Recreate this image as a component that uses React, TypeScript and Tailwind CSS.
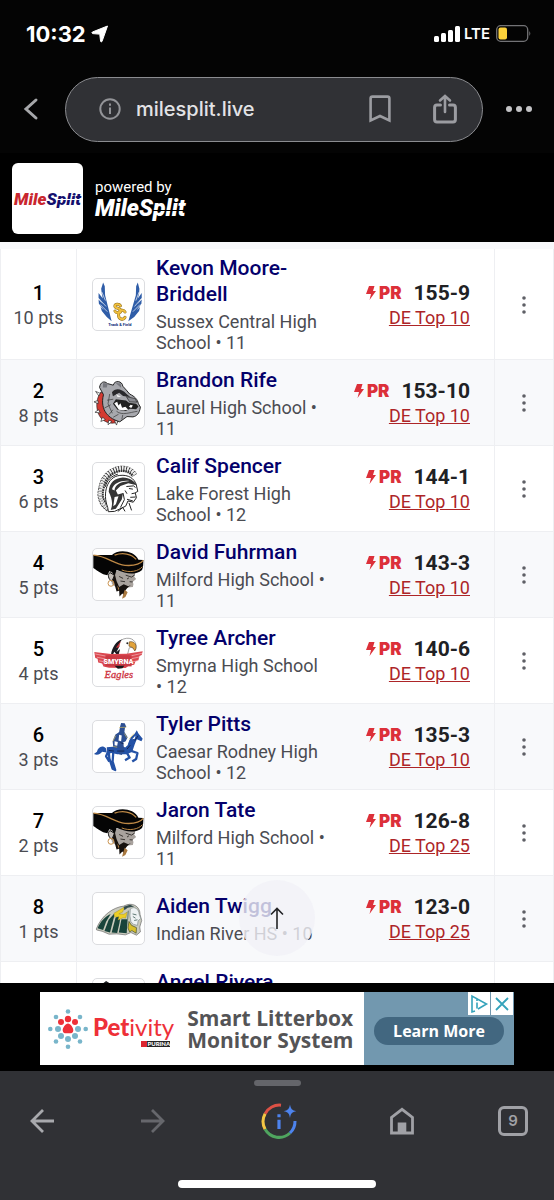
import React from 'react'

type Result = {
  rank?: number
  pts?: number
  name: string
  school?: string
  mark?: string
  top?: string
  logo: React.ReactNode
}

/* School logos, all drawn on a 156 x 156 canvas */
function WingsLogo() {
  return (
    <svg viewBox="0 0 156 156" className="w-full h-full">
      <g fill="#2f5da8">
        <path d="M31 11 L36 22 L37 50 L57 129 L42 116 L27 98 L23 86 L34 96 L18 76 L17 63 L31 78 L17 58 L17 43 L30 60 L27 46 L25 30 Z" />
        <path d="M137 11 L132 22 L131 50 L108 129 L126 116 L141 98 L144 86 L133 96 L148 76 L149 63 L135 78 L149 58 L149 43 L137 60 L141 46 L142 30 Z" />
      </g>
      <g stroke="#fff" strokeWidth="2" fill="none">
        <path d="M18 60 L40 84 M22 78 L44 100 M27 40 L38 66 M148 60 L127 84 M144 78 L122 100 M141 40 L131 66" />
      </g>
      <g fill="none" strokeLinecap="round">
        <path d="M84 82 C80 75 67 76 67 83 C67 91 85 88 85 97 C85 105 70 105 67 98 M98 101 C93 92 78 95 78 109 C78 124 93 127 98 117" stroke="#8a6a1c" strokeWidth="9" />
        <path d="M84 82 C80 75 67 76 67 83 C67 91 85 88 85 97 C85 105 70 105 67 98 M98 101 C93 92 78 95 78 109 C78 124 93 127 98 117" stroke="#f0bf3e" strokeWidth="6" />
      </g>
      <text x="82" y="145" textAnchor="middle" fontSize="12" fontWeight="900" fill="#233f86" fontFamily="Roboto, sans-serif">Track &amp; Field</text>
    </svg>
  )
}

function BulldogLogo() {
  return (
    <svg viewBox="0 0 156 156" className="w-full h-full">
      <path d="M24 46 C4 72 8 122 38 136 C50 143 66 142 76 138 L74 128 C44 126 24 92 34 52 Z" fill="#d43a31" stroke="#222" strokeWidth="2" />
      <g fill="#fff" stroke="#222" strokeWidth="2">
        <path d="M22 50 L8 44 L18 58 Z M15 72 L3 76 L16 82 Z M17 100 L6 108 L22 110 Z M29 123 L24 136 L38 130 Z M48 132 L46 146 L58 136 Z M66 134 L72 147 L76 133 Z" />
      </g>
      <path d="M20 32 C22 16 34 10 44 20 L62 25 C66 8 90 12 91 28 C98 36 106 44 112 52 C128 60 136 68 139 82 L145 92 C142 112 134 120 122 122 L104 121 L82 137 C50 128 20 104 32 54 Z" fill="#a7a8ad" stroke="#222" strokeWidth="3" />
      <path d="M31 18 L45 20 L42 32 L30 32 Z M69 18 L85 20 L86 33 Z" fill="#77787e" />
      <path d="M58 47 C68 32 88 36 102 51 L114 61 L92 58 L80 48 L61 59 Z" fill="#29292c" />
      <path d="M71 52 L86 61 L75 61 Z" fill="#f0f0f0" />
      <path d="M61 82 L70 68 L101 72 L110 79 L132 82 L139 90 L132 99 L113 97 L100 104 L75 100 Z" fill="#222" />
      <path d="M65 80 L74 76 L78 87 L84 80 L89 94 L99 91 L108 100 L93 102 L79 100 Z M115 85 L122 87 L117 95 L110 91 Z" fill="#fff" />
      <path d="M102 60 L128 66 L135 77 L112 76 Z" fill="#8b8c92" stroke="#222" strokeWidth="2" />
      <path d="M72 105 C90 119 112 108 136 105 M51 52 L46 82 L59 111 M43 71 L62 68 M35 95 L54 85 M49 115 L61 100 M62 123 L78 114 M88 130 L91 116" fill="none" stroke="#333" strokeWidth="2" />
    </svg>
  )
}

function SpartanLogo() {
  return (
    <svg viewBox="0 0 156 156" className="w-full h-full">
      <path d="M48 140 C26 124 19 102 26 78 C30 52 42 36 62 25 C86 12 114 17 127 38" fill="none" stroke="#333" strokeWidth="19" strokeDasharray="6 2" />
      <path d="M46 140 C25 124 17 102 24 78 C28 50 41 33 61 22 C86 9 116 14 129 36" fill="none" stroke="#f2f2f2" strokeWidth="11" strokeDasharray="5 3" />
      <path d="M45 136 C28 92 43 42 82 38 C109 35 126 48 132 65 L137 87 L129 91 L133 106 L123 120 L107 116 L100 132 L66 148 L47 149 Z" fill="#fff" stroke="#222" strokeWidth="3" />
      <path d="M48 88 C50 58 67 46 91 44 C113 44 128 56 134 68 L108 62 L84 70 L70 84 L76 96 L92 92 L88 112 L70 140 L54 144 C62 126 58 108 48 88 Z" fill="#353535" />
      <path d="M58 80 C64 61 86 52 112 55 L92 58 C76 62 66 72 66 84 Z M66 104 L78 102 L70 126 L62 132 Z" fill="#fff" />
      <path d="M102 72 L124 70 L130 75 M110 78 L122 80 M128 92 L118 94 M114 105 L131 104 M104 111 L122 116 M92 92 L96 112 L84 136 M98 84 L104 94" stroke="#222" strokeWidth="3" fill="none" />
      <path d="M38 73 C42 53 56 40 76 34 M76 148 L91 136 L98 148 M110 122 L118 145" stroke="#222" strokeWidth="3" fill="none" />
    </svg>
  )
}

function BuccaneerLogo() {
  return (
    <svg viewBox="0 0 156 156" className="w-full h-full">
      <path d="M52 66 L58 108 L78 122 L92 136 L106 118 L122 116 L124 106 L120 102 L132 92 L126 84 L130 70 Z" fill="#a9a39e" />
      <path d="M52 72 C44 76 46 94 58 98 L66 81 Z" fill="#c3bdb8" stroke="#111" strokeWidth="3" />
      <path d="M1 18 L58 18 C74 0 126 2 139 33 L154 34 C154 46 154 56 150 64 C134 78 112 76 96 72 L72 64 L66 84 L58 70 L50 68 L44 80 C26 78 14 66 1 58 Z" fill="#050505" />
      <path d="M1 19 C44 22 62 46 98 50 C124 52 143 48 154 35 M66 19 C90 10 118 14 132 32" fill="none" stroke="#bd8845" strokeWidth="4" />
      <path d="M88 64 C112 74 140 68 151 54" fill="none" stroke="#bd8845" strokeWidth="3" />
      <path d="M66 74 L72 98 L80 116 L94 108 L108 114 L116 110 L104 120 L98 128 L96 143 L90 136 L81 145 L80 128 L72 130 L66 108 L60 98 Z" fill="#17120f" />
      <path d="M97 125 L106 132 L99 147 L89 152 L92 140 Z M74 112 L80 120 L78 128 Z" fill="#a8783f" />
      <path d="M100 80 L118 86 L128 79 M104 92 L110 88 M112 100 L122 101 M80 84 L92 90 M84 98 L98 100" stroke="#383431" strokeWidth="3" fill="none" />
      <circle cx="55" cy="105" r="9" fill="none" stroke="#c8914c" strokeWidth="3" />
    </svg>
  )
}

function EagleLogo() {
  return (
    <svg viewBox="0 0 156 156" className="w-full h-full">
      <path d="M60 62 C62 35 78 13 103 10 C124 8 137 25 130 46 C126 41 119 36 111 39 L105 62 Z" fill="#fff" stroke="#777" strokeWidth="2" />
      <path d="M65 51 L58 65 L55 61 C58 38 71 19 88 14 L76 35 L82 32 L72 52 L83 43 L77 65 Z" fill="#1b1a20" />
      <path d="M70 39 L85 19 L79 38 Z" fill="#c7333a" />
      <path d="M111 21 C126 17 138 31 128 49 L122 39 L110 34 Z" fill="#e2a33b" stroke="#6c4920" strokeWidth="2" />
      <circle cx="105" cy="25" r="3" fill="#222" />
      <path d="M4 52 L55 58 L102 57 L152 50 L149 61 L142 64 L139 77 L130 80 L126 91 L109 94 L100 101 L49 100 L32 96 L28 87 L16 84 L14 73 L7 70 Z" fill="#db4850" />
      <path d="M7 58 L51 67 L107 66 L150 56 M12 68 L51 76 L107 75 L143 67 M19 79 L51 85 L107 85 L136 79" stroke="#f4bfc1" strokeWidth="2" fill="none" />
      <rect x="38" y="62" width="80" height="34" fill="#c93a44" />
      <text x="78" y="88" textAnchor="middle" fontSize="22" fontWeight="900" fill="#fff" fontFamily="Roboto, sans-serif">SMYRNA</text>
      <path d="M66 94 L96 94 L90 102 L76 103 Z" fill="#18171b" />
      <text x="79" y="131" textAnchor="middle" fontSize="32" fontStyle="italic" fill="#ce333f" stroke="#ce333f" strokeWidth="1" fontFamily="'Liberation Serif', serif">Eagles</text>
    </svg>
  )
}

function RiderLogo() {
  return (
    <svg viewBox="0 0 156 156" className="w-full h-full">
      <path d="M40 84 C28 72 16 80 12 94 L3 101 C14 106 24 100 28 94 L42 96 Z" fill="#2452a6" />
      <path d="M42 80 L70 78 L100 80 L116 50 L127 40 L134 28 L139 38 L152 54 L148 62 L134 56 L128 70 L120 94 L104 102 L74 102 L58 98 L44 100 Z" fill="#2452a6" />
      <path d="M48 92 L50 114 L60 146 L68 150 L60 124 L62 96 M46 94 L40 108 L50 124 M112 90 L136 98 L132 116 L120 124 M104 98 L112 112 L98 120" fill="none" stroke="#2452a6" strokeWidth="7" strokeLinejoin="round" />
      <path d="M83 16 L86 6 L97 7 L102 18 L98 20 L96 34 L106 50 L100 62 L92 66 L96 88 L88 104 L80 102 L82 84 L62 80 L60 62 L68 42 L80 34 Z" fill="#2c4f93" />
      <path d="M80 42 L88 44 L86 62 L78 60 Z M66 62 L76 64 L74 76 L66 74 Z M98 68 L110 60 L106 74 L98 80 Z M120 56 L130 44 L128 54 Z" fill="#fff" />
      <path d="M80 20 L102 19 M96 38 L104 52 M61 62 L70 44 M110 56 L126 38 M62 78 L74 80" stroke="#d6bd5b" strokeWidth="2" fill="none" />
      <path d="M84 66 L94 70 M104 86 L114 74 M48 90 L64 92 M128 60 L138 45 M74 92 L96 92" stroke="#142755" strokeWidth="3" fill="none" />
    </svg>
  )
}

function IndianLogo() {
  return (
    <svg viewBox="0 0 156 156" className="w-full h-full">
      <path d="M10 110 C27 67 62 44 94 40 C120 26 144 40 144 66 L149 84 L143 104 L145 119 L133 129 L116 121 L99 128 L73 125 L49 126 L28 117 L11 113 Z" fill="#c9cabd" stroke="#666" strokeWidth="2" />
      <path d="M14 108 C23 86 38 72 54 64 L40 88 L31 113 Z M35 116 L48 82 L68 60 L62 82 L52 121 Z M57 121 L69 76 L85 66 L81 92 L74 122 Z M79 121 L87 80 L106 80 L103 123 Z" fill="#19443b" />
      <path d="M64 62 L96 43 L91 58 L79 64 L94 65 L105 58 L100 77 L92 76 L76 83 L79 73 L66 74 Z" fill="#edce26" stroke="#7b7420" strokeWidth="1" />
      <path d="M94 42 L113 36 L126 41 L106 45 L96 53 Z" fill="#334b4c" />
      <path d="M114 49 C127 38 141 51 141 64 L146 78 L138 85 L136 99 L124 96 L116 88 L113 70 Z" fill="#eef2f3" stroke="#7c898b" strokeWidth="2" />
      <path d="M110 87 L118 99 L133 106 L132 123 L119 115 L112 119 L107 107 Z" fill="#d8bf2b" stroke="#3e4826" strokeWidth="2" />
      <path d="M121 64 L133 67 M122 72 L130 77 M126 84 L136 82 M108 54 L106 82" stroke="#5e7773" strokeWidth="3" fill="none" />
    </svg>
  )
}

function KnightLogo() {
  return (
    <svg viewBox="0 0 156 156" className="w-full h-full">
      <path d="M32 12 L40 6 L50 12 L58 31 L91 43 L113 77 L103 122 L48 139 L27 88 Z" fill="#202124" />
    </svg>
  )
}

const results: Result[] = [
  { rank: 1, pts: 10, name: 'Kevon Moore-Briddell', school: 'Sussex Central High School • 11', mark: '155-9', top: 'DE Top 10', logo: <WingsLogo /> },
  { rank: 2, pts: 8, name: 'Brandon Rife', school: 'Laurel High School • 11', mark: '153-10', top: 'DE Top 10', logo: <BulldogLogo /> },
  { rank: 3, pts: 6, name: 'Calif Spencer', school: 'Lake Forest High School • 12', mark: '144-1', top: 'DE Top 10', logo: <SpartanLogo /> },
  { rank: 4, pts: 5, name: 'David Fuhrman', school: 'Milford High School • 11', mark: '143-3', top: 'DE Top 10', logo: <BuccaneerLogo /> },
  { rank: 5, pts: 4, name: 'Tyree Archer', school: 'Smyrna High School • 12', mark: '140-6', top: 'DE Top 10', logo: <EagleLogo /> },
  { rank: 6, pts: 3, name: 'Tyler Pitts', school: 'Caesar Rodney High School • 12', mark: '135-3', top: 'DE Top 10', logo: <RiderLogo /> },
  { rank: 7, pts: 2, name: 'Jaron Tate', school: 'Milford High School • 11', mark: '126-8', top: 'DE Top 25', logo: <BuccaneerLogo /> },
  { rank: 8, pts: 1, name: 'Aiden Twigg', school: 'Indian River HS • 10', mark: '123-0', top: 'DE Top 25', logo: <IndianLogo /> },
  { name: 'Angel Rivera', logo: <KnightLogo /> },
]

function StatusBar() {
  return (
    <div className="flex items-center justify-between h-[67px] pl-[26px] pr-[22px] font-['Inter',sans-serif] text-white">
      <div className="flex items-center gap-[5px]">
        <span className="text-[22px] leading-6 font-bold">10:32</span>
        <svg viewBox="0 0 18 18" className="w-[18px] h-[18px]">
          <path d="M16.5 1 L11 16.5 Q10.3 17.6 9.6 16.3 L8.8 9.8 Q8.7 9.2 8 9.1 L1.6 8.6 Q.2 8 1.4 7 Z" fill="#fff" stroke="#fff" strokeLinejoin="round" />
        </svg>
      </div>
      <div className="flex items-center gap-1">
        <svg viewBox="0 0 26 16" className="w-[26px] h-4" fill="#fff">
          <rect x="0" y="10" width="5" height="6" rx="1.5" />
          <rect x="7" y="7" width="5" height="9" rx="1.5" />
          <rect x="14" y="4" width="5" height="12" rx="1.5" />
          <rect x="21" y="0" width="5" height="16" rx="1.5" />
        </svg>
        <span className="text-[15px] leading-5 font-semibold">LTE</span>
        <svg viewBox="0 0 36 17" className="w-9 h-[17px] ml-[2px]">
          <rect x=".7" y=".7" width="31" height="15.6" rx="4" fill="none" stroke="#737376" strokeWidth="1.3" />
          <rect x="2.5" y="2.5" width="8.5" height="12" rx="2" fill="#fdd23a" />
          <path d="M33.3 6 Q35.3 8.5 33.3 11 Z" fill="#737376" />
        </svg>
      </div>
    </div>
  )
}

function AddressBar() {
  return (
    <div className="flex items-center h-[86px] pb-0.5 pl-[23px] pr-[22px]">
      <button aria-label="Back">
        <svg viewBox="0 0 16 24" className="w-4 h-6" fill="none" stroke="#a6a7aa" strokeWidth="3" strokeLinecap="round">
          <path d="M13 3 L3 12 L13 21" />
        </svg>
      </button>
      <div className="flex-1 min-w-0 flex items-center h-[65px] ml-[26px] mr-[23px] pl-[33px] pr-[25px] rounded-full border border-[#8b8c90] bg-[#303135]">
        <svg viewBox="0 0 22 22" className="w-[22px] h-[22px] shrink-0" fill="none" stroke="#939498" strokeWidth="2">
          <circle cx="11" cy="11" r="9.7" />
          <path d="M11 9.5 V16 M11 5.5 V7.7" />
        </svg>
        <input
          aria-label="Address"
          defaultValue="milesplit.live"
          className="flex-1 min-w-0 ml-[15px] bg-transparent outline-none text-[#e3e3e6] font-['Inter',sans-serif] text-[20px] leading-7 font-medium"
        />
        <button aria-label="Bookmark" className="shrink-0">
          <svg viewBox="0 0 22 28" className="w-[22px] h-7" fill="none" stroke="#9b9ca1" strokeWidth="2.6">
            <path d="M1.6 25.5 V3.5 Q1.6 1.6 3.5 1.6 H18.5 Q20.4 1.6 20.4 3.5 V25.5 L11 21 Z" />
          </svg>
        </button>
        <button aria-label="Share" className="shrink-0 ml-[42px]">
          <svg viewBox="0 0 24 30" className="w-6 h-[30px]" fill="none" stroke="#9b9ca1" strokeWidth="3" strokeLinecap="round">
            <path d="M7.5 11 H4 Q1.6 11 1.6 13.5 V25.5 Q1.6 28 4 28 H20 Q22.4 28 22.4 25.5 V13.5 Q22.4 11 20 11 H16.5" />
            <path d="M12 18 V2.5 M7 6.5 L12 2 L17 6.5" strokeWidth="2.6" />
          </svg>
        </button>
      </div>
      <button aria-label="More" className="shrink-0">
        <svg viewBox="0 0 26 6" className="w-[26px] h-1.5" fill="#c3c3c6">
          <circle cx="3" cy="3" r="3" />
          <circle cx="13" cy="3" r="3" />
          <circle cx="23" cy="3" r="3" />
        </svg>
      </button>
    </div>
  )
}

function SiteHeader() {
  return (
    <header className="flex items-center h-[89px] pt-0.5 pl-3 gap-3 bg-black font-['Roboto',sans-serif]">
      <a href="#" className="flex items-center justify-center w-[71px] h-[71px] rounded-md bg-white text-[17px] leading-5 font-black italic">
        <span className="text-[#c9262e]">Mile</span>
        <span className="relative text-[#14106e]">
          Split
          <span className="absolute left-[10px] right-0 top-[10px] h-px bg-white" />
        </span>
      </a>
      <div className="text-white">
        <div className="text-[15px] leading-5">powered by</div>
        <div className="text-[23px] leading-[23px] font-black italic">
          Mile
          <span className="relative">
            Split
            <span className="absolute left-[14px] right-0 top-[15px] h-px bg-black" />
          </span>
        </div>
      </div>
    </header>
  )
}

function ResultRow({ result }: { result: Result }) {
  return (
    <tr className="border-b border-[#eeeff2] odd:bg-white even:bg-[#f8f9fb]">
      <td className="pt-[2px] border-x border-[#eeeff2] text-center">
        {result.rank && (
          <>
            <div className="text-[20px] leading-6 font-medium text-black">{result.rank}</div>
            <div className="text-lg leading-[25px] text-[#4b4c52]">{result.pts} pts</div>
          </>
        )}
      </td>
      <td className="h-[86px] pt-[6px] pb-[6px] pl-[15px]">
        <div className="flex items-center gap-[11px]">
          <div className="w-[53px] h-[53px] shrink-0 rounded-[5px] border border-[#dcdde0] bg-white overflow-hidden">
            {result.logo}
          </div>
          <div className="flex-1 min-w-0">
            <a href="#" className="block mb-1 text-[21px] leading-[26px] font-medium text-[#04006b]">{result.name}</a>
            <div className={result.school ? 'text-lg leading-[21px] text-[#4b4c52]' : 'h-[42px]'}>{result.school}</div>
          </div>
        </div>
      </td>
      <td className="pt-[2px] pr-6 text-right whitespace-nowrap">
        {result.mark && (
          <>
            <div className="flex items-center justify-end leading-6">
              <svg viewBox="0 0 10 14" className="w-[10px] h-[14px] mr-[3px]" fill="#dc3039">
                <path d="M3 0 H8.5 L7 5 H10 L3.5 14 L5 8 H0 Z" />
              </svg>
              <span className="font-['Inter',sans-serif] text-[17px] leading-6 font-black text-[#dc3039]">PR</span>
              <span className="ml-3 text-[21px] font-bold text-[#202124]">{result.mark}</span>
            </div>
            <a href="#" className="block text-lg leading-[25px] text-[#ad2528] underline">{result.top}</a>
          </>
        )}
      </td>
      <td className="border-x border-[#eeeff2] text-center">
        {result.mark && (
          <button aria-label={`Options for ${result.name}`} className="align-middle">
            <svg viewBox="0 0 4 18" className="w-1 h-[18px]" fill="#5f6066">
              <circle cx="2" cy="2" r="1.8" />
              <circle cx="2" cy="9" r="1.8" />
              <circle cx="2" cy="16" r="1.8" />
            </svg>
          </button>
        )}
      </td>
    </tr>
  )
}

function AdBanner() {
  return (
    <aside className="flex justify-center pt-[9px] pb-[6px] bg-black font-['Open_Sans','Noto_Sans',sans-serif]">
      <div className="relative flex w-[474px] h-[73px] bg-white">
        <div className="flex-1 flex items-center pl-2">
          <svg viewBox="0 0 40 40" className="w-10 h-10 shrink-0">
            <g fill="#78b5ca">
              <circle cx="20" cy="2.5" r="2.3" />
              <circle cx="32" cy="8" r="2.3" />
              <circle cx="37.7" cy="20" r="2.3" />
              <circle cx="32" cy="32.5" r="2.3" />
              <circle cx="20" cy="37.7" r="2.3" />
              <circle cx="8" cy="32.5" r="2.3" />
              <circle cx="2.3" cy="20" r="2.3" />
              <circle cx="8" cy="8" r="2.3" />
              <circle cx="10" cy="20" r="3" />
              <circle cx="13" cy="27" r="3" />
              <circle cx="20" cy="30" r="3" />
              <circle cx="27" cy="27" r="3" />
              <circle cx="30" cy="20" r="3" />
            </g>
            <g fill="#ee3038">
              <circle cx="13" cy="13" r="3" />
              <circle cx="20" cy="10" r="3.2" />
              <circle cx="27" cy="13" r="3" />
              <path d="M20 14.5 C22.5 14.5 25.5 19 25.3 21.5 C25 25 22 24.2 20 24.2 C18 24.2 15 25 14.7 21.5 C14.5 19 17.5 14.5 20 14.5 Z" />
            </g>
          </svg>
          <div className="flex flex-col items-end ml-[5px] pt-px font-['Lato',sans-serif]">
            <div className="text-[24px] leading-[29px] text-[#ee3038]">
              <span className="font-black">Pet</span>ivity
            </div>
            <div className="mr-1 flex bg-[#262626] text-white text-[6px] leading-[6px] font-black">
              <span className="w-[6px] bg-[#dc2630]" />PURINA
            </div>
          </div>
          <div className="ml-[13px] text-[21px] leading-[22px] font-bold text-[#545456] whitespace-nowrap">
            Smart Litterbox<br />Monitor System
          </div>
        </div>
        <div className="flex items-center justify-center w-[150px] pt-1 bg-[#7298af]">
          <button className="w-[130px] h-[28px] rounded-full bg-[#426780] text-[16px] leading-6 font-bold text-white">Learn More</button>
        </div>
        <div className="absolute top-0 right-[1px] flex gap-px">
          <a href="#" aria-label="AdChoices" className="w-[22px] h-[23px] bg-white">
            <svg viewBox="0 0 22 23" className="w-full h-full" fill="none" stroke="#35a3bb" strokeWidth="1.6">
              <path d="M7 19 L4 20 V4 L18.5 12 L10 17 M9 10.5 V16.5 M9 7.5 V9" />
            </svg>
          </a>
          <button aria-label="Close ad" className="w-[22px] h-[23px] bg-white">
            <svg viewBox="0 0 22 23" className="w-full h-full" stroke="#35a3bb" strokeWidth="1.8">
              <path d="M5 6 L17 18 M17 6 L5 18" />
            </svg>
          </button>
        </div>
      </div>
    </aside>
  )
}

function BottomBar() {
  return (
    <footer className="flex flex-col items-center h-[129px] pt-[9px] pb-3 bg-[#303135]">
      <div className="w-[47px] h-1.5 rounded-full bg-[#64656a]" />
      <nav className="flex items-center justify-between w-full mt-4 pl-[30px] pr-[26px]">
        <button aria-label="Previous page">
          <svg viewBox="0 0 24 24" className="w-6 h-6" fill="none" stroke="#a8a9ad" strokeWidth="2.8">
            <path d="M24 12 H2 M13 1 L2 12 L13 23" />
          </svg>
        </button>
        <button aria-label="Next page" className="mx-1">
          <svg viewBox="0 0 24 24" className="w-6 h-6" fill="none" stroke="#66676c" strokeWidth="2.8">
            <path d="M0 12 H22 M11 1 L22 12 L11 23" />
          </svg>
        </button>
        <button aria-label="Search" className="mx-2">
          <svg viewBox="0 0 38 38" className="w-[38px] h-[38px]" fill="none" strokeWidth="3">
            <path d="M5.1 11.8 A16 16 0 0 1 21 3.2" stroke="#dc5145" />
            <path d="M5.1 27.2 A16 16 0 0 1 5.1 11.8" stroke="#f3c644" />
            <path d="M30 31 A16 16 0 0 1 5.1 27.2" stroke="#4fa55f" />
            <path d="M35 19 A16 16 0 0 1 30 31" stroke="#4d83ed" />
            <path d="M30 2.5 C30.8 7 32 8.3 36.3 9.2 C32 10 30.8 11.3 30 16 C29.2 11.3 28 10 23.7 9.2 C28 8.3 29.2 7 30 2.5 Z" fill="#4d83ed" />
            <path d="M19 12.2 V15.2 M19 17.8 V27" stroke="#4d83ed" strokeWidth="3.2" />
          </svg>
        </button>
        <button aria-label="Home">
          <svg viewBox="0 0 26 28" className="w-[26px] h-7">
            <path d="M2.5 26 V10.5 L13 2.3 L23.5 10.5 V26 Z" fill="none" stroke="#a0a1a6" strokeWidth="2.8" />
            <path d="M8.7 26 V15.5 H17.3 V26 Z" fill="#a0a1a6" />
          </svg>
        </button>
        <button aria-label="Tabs" className="w-[30px] h-[30px] rounded-md border-[3px] border-[#a0a1a6] text-[#a0a1a6] font-['Inter',sans-serif] text-[15px] leading-6 font-semibold">
          9
        </button>
      </nav>
      <div className="mt-auto w-[198px] h-2 rounded-full bg-white" />
    </footer>
  )
}

export default function App() {
  return (
    <div className="flex flex-col h-screen bg-[#040404]">
      <StatusBar />
      <AddressBar />
      <SiteHeader />

      <main className="relative flex-1 min-h-0 overflow-hidden bg-[#f8f9fb] pt-[7px] font-['Roboto',sans-serif]">
        <table className="w-full table-fixed border-collapse">
          <colgroup>
            <col className="w-[76px]" />
            <col />
            <col className="w-[167px]" />
            <col className="w-[59px]" />
          </colgroup>
          <tbody>
            {results.map((result) => (
              <ResultRow key={result.name} result={result} />
            ))}
          </tbody>
        </table>

        {/* Back to top */}
        <button aria-label="Back to top" className="absolute bottom-[27px] left-1/2 -translate-x-1/2 flex items-center justify-center w-[76px] h-[76px] rounded-full bg-[#f1f1f7]/80">
          <svg viewBox="0 0 14 22" className="w-[14px] h-[22px]" fill="none" stroke="#222326" strokeWidth="1.6">
            <path d="M7 22 V1.5 M1 7.5 L7 1.5 L13 7.5" />
          </svg>
        </button>
      </main>

      <AdBanner />
      <BottomBar />
    </div>
  )
}
